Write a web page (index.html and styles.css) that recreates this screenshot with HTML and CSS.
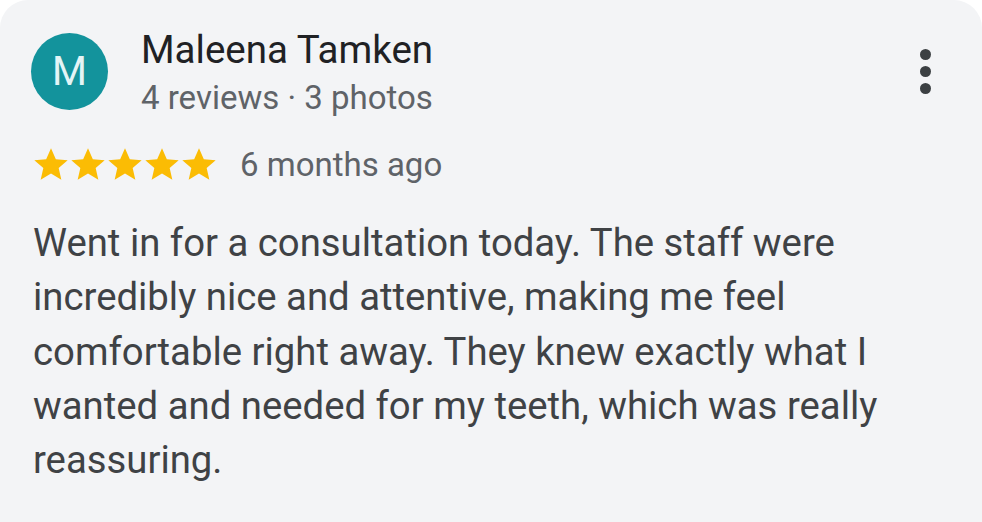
FILE: index.html
```html
<!DOCTYPE html>
<html>
<head>
<meta charset="utf-8">
<link rel="stylesheet" href="styles.css">
</head>
<body>
<div class="card">
  <div class="header">
    <div class="avatar">M</div>
    <div class="who">
      <div class="name">Maleena Tamken</div>
      <div class="meta">4 reviews · 3 photos</div>
    </div>
    <div class="more"><span></span><span></span><span></span></div>
  </div>
  <div class="rating">
    <div class="stars">
      <svg viewBox="0 0 24 24" class="star"><path d="M12 2.5l2.9 6.6 7.1.6-5.4 4.7 1.6 7-6.2-3.7-6.2 3.7 1.6-7L2 9.7l7.1-.6z"/></svg>
      <svg viewBox="0 0 24 24" class="star"><path d="M12 2.5l2.9 6.6 7.1.6-5.4 4.7 1.6 7-6.2-3.7-6.2 3.7 1.6-7L2 9.7l7.1-.6z"/></svg>
      <svg viewBox="0 0 24 24" class="star"><path d="M12 2.5l2.9 6.6 7.1.6-5.4 4.7 1.6 7-6.2-3.7-6.2 3.7 1.6-7L2 9.7l7.1-.6z"/></svg>
      <svg viewBox="0 0 24 24" class="star"><path d="M12 2.5l2.9 6.6 7.1.6-5.4 4.7 1.6 7-6.2-3.7-6.2 3.7 1.6-7L2 9.7l7.1-.6z"/></svg>
      <svg viewBox="0 0 24 24" class="star"><path d="M12 2.5l2.9 6.6 7.1.6-5.4 4.7 1.6 7-6.2-3.7-6.2 3.7 1.6-7L2 9.7l7.1-.6z"/></svg>
    </div>
    <span class="when">6 months ago</span>
  </div>
  <p class="text">Went in for a consultation today. The staff were incredibly nice and attentive, making me feel comfortable right away. They knew exactly what I wanted and needed for my teeth, which was really reassuring.</p>
</div>
</body>
</html>
```
FILE: styles.css
```css
html, body {
  margin: 0;
  padding: 0;
  background: #ffffff;
}
body {
  width: 982px;
  height: 522px;
  overflow: hidden;
  font-family: Roboto, "Liberation Sans", Arial, sans-serif;
}
.card {
  box-sizing: border-box;
  width: 982px;
  height: 522px;
  background: #f3f4f6;
  border-radius: 28px 28px 0 0;
  padding: 33px 0 0 31px;
}
.header {
  display: flex;
  align-items: flex-start;
}
.avatar {
  width: 77px;
  height: 77px;
  border-radius: 50%;
  background: #13939c;
  color: #e3f5f6;
  font-size: 40px;
  display: flex;
  align-items: center;
  justify-content: center;
  flex: none;
}
.who {
  margin-left: 33px;
  margin-top: -9px;
}
.name {
  font-size: 38.5px;
  line-height: 51px;
  color: #202124;
}
.meta {
  font-size: 33px;
  line-height: 46px;
  color: #5f6368;
}
.more {
  margin-left: auto;
  margin-right: 51px;
  margin-top: 16px;
  display: flex;
  flex-direction: column;
  gap: 6px;
}
.more span {
  display: block;
  width: 11px;
  height: 11px;
  border-radius: 50%;
  background: #3c4043;
}
.rating {
  display: flex;
  align-items: center;
  margin-top: 22px;
}
.stars {
  display: flex;
}
.star {
  width: 40px;
  height: 40px;
  margin-right: -3px;
  fill: #fbbc04;
}
.star:last-child {
  margin-right: 0;
}
.when {
  margin-left: 21px;
  font-size: 33px;
  line-height: 40px;
  padding-top: 2px;
  color: #5f6368;
}
.text {
  margin: 31px 0 0 2px;
  width: 880px;
  font-size: 38.3px;
  line-height: 54.3px;
  color: #3f4245;
}
```
